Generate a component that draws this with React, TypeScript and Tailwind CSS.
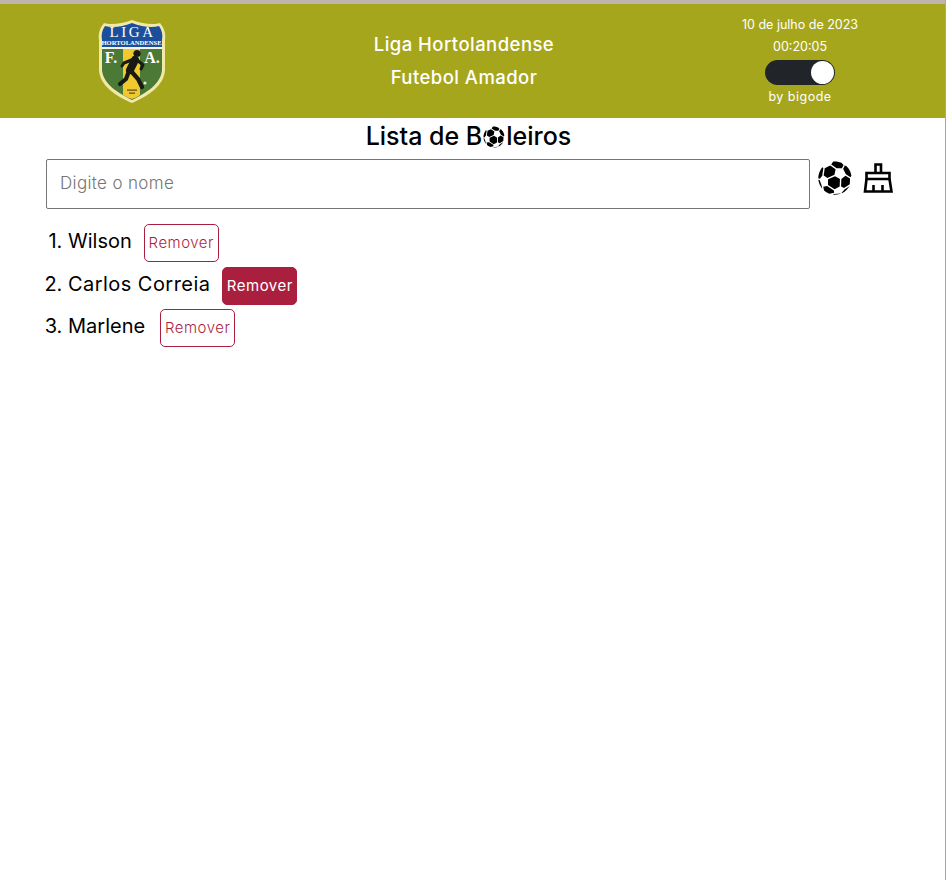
import { GiSoccerBall } from "react-icons/gi";

const players = [
  { name: "Wilson", hover: false, gap: "ml-3" },
  { name: "Carlos Correia", hover: true, gap: "ml-3" },
  { name: "Marlene", hover: false, gap: "ml-[15px]" },
];

function Logo() {
  return (
    <svg width="68" height="84" viewBox="0 0 68 84" className="block">
      <path d="M34 0 C44 4 56 5 62 3 C66 8 68 13 67 20 L67 50 C66 66 50 76 34 83 C18 76 2 66 1 50 L1 20 C0 13 2 8 6 3 C12 5 24 4 34 0 Z" fill="#f2e9a8" />
      <path d="M34 3 C44 7 54 8 61 6 C64 10 65 15 64 20 L64 27 L4 27 L4 20 C3 15 4 10 7 6 C14 8 24 7 34 3 Z" fill="#1b4f9c" />
      <path d="M4 29 L64 29 L64 50 C63 64 48 73 34 80 C20 73 5 64 4 50 Z" fill="#4a7a35" />
      <rect x="4" y="27" width="60" height="2" fill="#f4f4ea" />
      <path d="M25 29 L42 29 L42 75 C39 77 37 78 34 79 C31 78 28 77 25 75 Z" fill="#f0c92e" />
      <circle cx="39" cy="33.5" r="3.6" fill="#1a1a14" />
      <path d="M37 40 L32 50" stroke="#1a1a14" strokeWidth="8" strokeLinecap="round" />
      <path d="M36 39 L26 43 L24 46 M38 39 L45 45 L43 49" fill="none" stroke="#1a1a14" strokeWidth="3" strokeLinecap="round" strokeLinejoin="round" />
      <path d="M31 51 L28 59 L22 64 M33 51 L40 59 L44 67" fill="none" stroke="#1a1a14" strokeWidth="4.2" strokeLinecap="round" strokeLinejoin="round" />
      <circle cx="47" cy="63" r="1.6" fill="#e8e8d8" />
      <rect x="29" y="69.5" width="10" height="1.2" fill="#5a4a12" />
      <rect x="31" y="72.5" width="6" height="1.2" fill="#5a4a12" />
      <text x="34.5" y="17" textAnchor="middle" fill="#ffffff" fontFamily="'Liberation Serif', serif" fontSize="15" letterSpacing="2.6">LIGA</text>
      <text x="33.5" y="25" textAnchor="middle" fill="#ffffff" fontFamily="'Liberation Serif', serif" fontSize="6.6" fontWeight="700">HORTOLANDENSE</text>
      <text x="13" y="43" textAnchor="middle" fill="#ffffff" fontFamily="'Liberation Serif', serif" fontSize="16" fontWeight="700">F.</text>
      <text x="54" y="43" textAnchor="middle" fill="#ffffff" fontFamily="'Liberation Serif', serif" fontSize="16" fontWeight="700">A.</text>
    </svg>
  );
}

function BroomIcon() {
  return (
    <svg width="30" height="30" viewBox="0 0 30 30" fill="none" stroke="#000000" strokeWidth="2.6" className="mt-[4px] ml-[9px]">
      <path d="M12.5 10 L12.5 1.5 L18 1.5 L18 10" />
      <path d="M3.5 10 L26.5 10 L26.5 16 L3.5 16 Z" />
      <path d="M3.5 16 L2 28.5 L28.5 28.5 L26.5 16" />
      <path d="M10.5 22 L10.5 28.5 M19.5 22 L19.5 28.5" />
    </svg>
  );
}

export default function App() {
  return (
    <div className="min-h-[880px] border-r border-[#ee9a2a] bg-white font-['Inter',sans-serif] text-black">
      <header className="flex h-[118px] border-t-4 border-[#c0b5ae] bg-[#a6a61d] text-white">
        <div className="flex w-[264px] justify-center pt-4">
          <Logo />
        </div>
        <div className="flex w-[400px] flex-col items-center pt-6 text-[18.5px] leading-[33px] font-medium tracking-[0.45px]">
          <span>Liga Hortolandense</span>
          <span>Futebol Amador</span>
        </div>
        <div className="flex w-[272px] flex-col items-center pt-[10px] text-[12.5px] leading-[22px]">
          <span>10 de julho de 2023</span>
          <span>00:20:05</span>
          <div className="mt-[2px] flex h-[25px] w-[70px] items-center justify-end rounded-full bg-[#212529] pr-px">
            <div className="h-[23px] w-[23px] rounded-full bg-white" />
          </div>
          <span className="mt-px tracking-[0.5px]">by bigode</span>
        </div>
      </header>

      <main className="px-[46px]">
        <h1 className="mb-[3px] flex h-[38px] items-center justify-center pr-2 text-[25px] font-medium">
          Lista de B
          <GiSoccerBall className="h-6 w-6" />
          leiros
        </h1>
        <div className="flex items-start">
          <input
            className="h-[50px] w-[764px] rounded-[2px] border border-[#767676] px-[13px] pb-[2px] text-[17px] font-light tracking-[0.35px] placeholder:text-[#757575]"
            placeholder="Digite o nome"
          />
          <GiSoccerBall className="ml-[6px] h-[38px] w-[38px]" />
          <BroomIcon />
        </div>
        <ol className="mt-[15px] list-decimal pl-[22px] text-[20px] marker:tracking-normal marker:[font-variant-numeric:normal]">
          {players.map((player) => (
            <li className="mb-[4.5px] h-[38px] leading-[34px]" key={player.name}>
              <span className={player.hover ? "tracking-[0.45px]" : "tracking-normal"}>{player.name}</span>
              <button
                className={
                  player.hover
                    ? `${player.gap} h-[38px] w-[75px] rounded-[5px] border border-[#ab1f3e] bg-[#ab1f3e] align-middle text-[15px] tracking-[0.5px] text-white`
                    : `${player.gap} h-[38px] w-[75px] rounded-[5px] border border-[#ab1f3e] bg-white align-middle text-[15px] font-light tracking-[0.5px] text-[#ab1f3e]`
                }
              >
                Remover
              </button>
            </li>
          ))}
        </ol>
      </main>
    </div>
  );
}
